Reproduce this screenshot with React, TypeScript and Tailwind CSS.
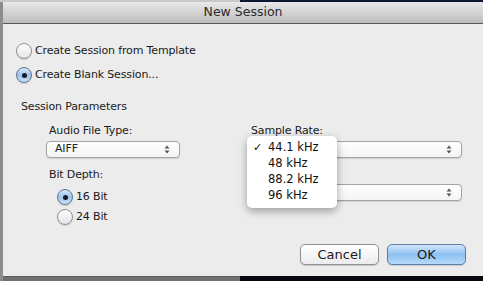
import React from "react";

const font = { fontFamily: '"DejaVu Sans", "Liberation Sans", sans-serif' };

function Radio({ checked }: { checked?: boolean }) {
  return checked ? (
    <span className="w-[16px] h-[16px] rounded-full border border-[#5d7394] bg-gradient-to-b from-[#d7e8f8] via-[#9cc3ea] to-[#cde3f8] flex items-center justify-center shrink-0 shadow-[0_1px_1px_rgba(0,0,0,0.15)]">
      <span className="w-[5px] h-[5px] rounded-full bg-[#141c28]" />
    </span>
  ) : (
    <span className="w-[16px] h-[16px] rounded-full border border-[#8e8e8e] bg-gradient-to-b from-white to-[#e4e4e4] shrink-0 shadow-[0_1px_1px_rgba(0,0,0,0.12)]" />
  );
}

function Arrows() {
  return (
    <svg width="6" height="9" viewBox="0 0 6 9" className="shrink-0">
      <path d="M3 0.5 L5.5 3.5 H0.5 Z" fill="#555" />
      <path d="M3 8.5 L5.5 5.5 H0.5 Z" fill="#555" />
    </svg>
  );
}

function Select({ value, className }: { value?: string; className: string }) {
  return (
    <div
      className={`h-[17px] rounded-[4px] border border-[#a3a3a3] bg-gradient-to-b from-white to-[#f4f4f4] shadow-[0_1px_1px_rgba(0,0,0,0.12)] flex items-center justify-between pl-[8px] pr-[9px] text-[11px] text-[#222] ${className}`}
    >
      <span>{value}</span>
      <Arrows />
    </div>
  );
}

export default function App() {
  return (
    <div className="w-[483px] h-[281px] overflow-hidden flex flex-col bg-[#0b1631]" style={font}>
      {/* desktop strip above the sheet */}
      <div className="flex h-[2px] shrink-0">
        <div className="w-[240px] bg-[#c9c9c9]" />
        <div className="flex-1 bg-[#0b1733]" />
      </div>

      <div className="flex flex-1 min-h-0">
        <div className="w-[3px] bg-[#8c8c8c] shrink-0" />
        <div className="flex-1 flex flex-col bg-[#ececec]">
          {/* title bar */}
          <div className="h-[22px] shrink-0 bg-gradient-to-b from-[#e9e9e9] to-[#bdbdbd] border-b border-[#595959] flex items-center justify-center text-[12.5px] text-[#2b2b2b]">
            New Session
          </div>

          {/* body */}
          <div className="flex-1 flex flex-col pl-[13px] pt-[19px] text-[11px] tracking-[-0.15px] text-[#1a1a1a] relative">
            <div className="flex items-center gap-[3px] h-[16px]">
              <Radio />
              <span>Create Session from Template</span>
            </div>
            <div className="flex items-center gap-[3px] h-[16px] mt-[8px]">
              <Radio checked />
              <span>Create Blank Session...</span>
            </div>

            <div className="mt-[17px] ml-[5px] h-[14px] leading-[14px] text-[#222]">Session Parameters</div>

            <div className="flex mt-[10px]">
              <div className="ml-[30px] w-[134px] flex flex-col">
                <div className="pl-[3px] h-[14px] leading-[14px]">Audio File Type:</div>
                <Select value="AIFF" className="mt-[3px] w-[134px]" />
                <div className="pl-[3px] h-[14px] leading-[14px] mt-[10px]">Bit Depth:</div>
                <div className="flex items-center gap-[3px] ml-[11px] mt-[7px] h-[16px]">
                  <Radio checked />
                  <span>16 Bit</span>
                </div>
                <div className="flex items-center gap-[3px] ml-[11px] mt-[4px] h-[16px]">
                  <Radio />
                  <span>24 Bit</span>
                </div>
              </div>

              <div className="ml-[67px] w-[215px] flex flex-col relative">
                <div className="pl-[4px] h-[14px] leading-[14px]">Sample Rate:</div>
                <Select className="mt-[3px] w-[215px]" />
                <Select className="mt-[26px] w-[215px]" />

                {/* open popup menu */}
                <div className="absolute left-0 top-[12px] w-[90px] h-[72px] bg-white rounded-[5px] shadow-[0_3px_8px_rgba(0,0,0,0.35)] flex flex-col pt-[4px] text-[11.5px] tracking-normal text-[#111]">
                  <div className="flex items-center h-[16px]">
                    <span className="w-[21px] pl-[6px] text-[11px]">✓</span>
                    <span>44.1 kHz</span>
                  </div>
                  <div className="flex items-center h-[16px] pl-[21px]">48 kHz</div>
                  <div className="flex items-center h-[16px] pl-[21px]">88.2 kHz</div>
                  <div className="flex items-center h-[16px] pl-[21px]">96 kHz</div>
                </div>
              </div>
            </div>

            <div className="absolute right-[17px] bottom-[11px] flex gap-[8px] tracking-normal">
              <button className="w-[79px] h-[21px] rounded-[5px] border border-[#8f8f8f] bg-gradient-to-b from-white to-[#ececec] shadow-[0_1px_1px_rgba(0,0,0,0.15)] text-[13px] text-[#1a1a1a]">
                Cancel
              </button>
              <button className="w-[79px] h-[21px] rounded-[5px] border border-[#5b7ea7] bg-gradient-to-b from-[#d3e7fb] via-[#8cc1f1] to-[#b6d9f9] shadow-[0_1px_1px_rgba(0,0,0,0.15)] text-[13px] text-[#1a1a1a]">
                OK
              </button>
            </div>
          </div>
        </div>
      </div>

      <div className="flex h-[5px] shrink-0">
        <div className="w-[3px] bg-[#8c8c8c]" />
        <div className="w-[237px] bg-[#707070] border-t border-[#5a5a5a]" />
        <div className="flex-1 bg-[#05070d]" />
      </div>
    </div>
  );
}
